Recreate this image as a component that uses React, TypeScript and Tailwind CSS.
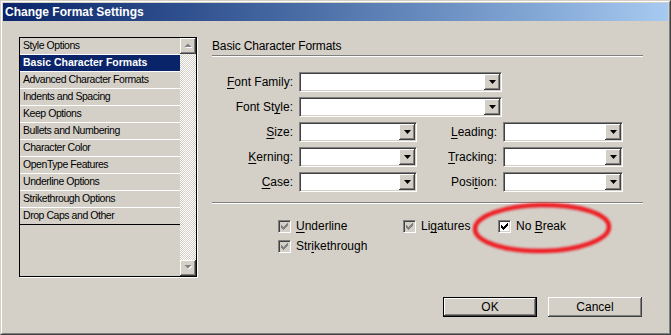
import type { ReactNode } from "react";

const items = [
  "Style Options",
  "Basic Character Formats",
  "Advanced Character Formats",
  "Indents and Spacing",
  "Keep Options",
  "Bullets and Numbering",
  "Character Color",
  "OpenType Features",
  "Underline Options",
  "Strikethrough Options",
  "Drop Caps and Other",
];

const raised =
  "bg-[#d4d0c8] shadow-[inset_-1px_-1px_0_#404040,inset_1px_1px_0_#ffffff,inset_-2px_-2px_0_#808080,inset_2px_2px_0_#d4d0c8]";

const sunken =
  "border border-t-[#808080] border-l-[#808080] border-b-white border-r-white shadow-[inset_1px_1px_0_#404040,inset_-1px_-1px_0_#d4d0c8]";

function Key({ children }: { children: ReactNode }) {
  return <span className="underline underline-offset-[2px]">{children}</span>;
}

function DropButton() {
  return (
    <div className={`flex h-full w-[16px] items-center justify-center ${raised}`}>
      <svg width="7" height="4" viewBox="0 0 7 4">
        <polygon points="0,0 7,0 3.5,4" fill="#000" />
      </svg>
    </div>
  );
}

function Combo({ width }: { width: string }) {
  return (
    <div className={`ml-[6px] flex h-[20px] justify-end bg-white p-[1px] ${sunken} ${width}`}>
      <DropButton />
    </div>
  );
}

function ScrollButton({ up }: { up: boolean }) {
  return (
    <div className={`flex h-[16px] w-[16px] items-center justify-center ${raised}`}>
      <svg width="9" height="6" viewBox="0 0 9 6">
        {up ? (
          <>
            <polygon points="1.5,5 8.5,5 5,1.5" fill="#ffffff" />
            <polygon points="0.5,4 7.5,4 4,0.5" fill="#808080" />
          </>
        ) : (
          <>
            <polygon points="1.5,1 8.5,1 5,4.5" fill="#ffffff" />
            <polygon points="0.5,0 7.5,0 4,3.5" fill="#808080" />
          </>
        )}
      </svg>
    </div>
  );
}

function Check({ enabled, children }: { enabled: boolean; children: ReactNode }) {
  return (
    <div className="flex h-[20px] items-center gap-[5px]">
      <div
        className={`flex h-[13px] w-[13px] items-center justify-center ${sunken} ${
          enabled ? "bg-white" : "bg-[#d4d0c8]"
        }`}
      >
        <svg width="7" height="7" viewBox="0 0 7 7" shapeRendering="crispEdges">
          <path
            d="M6 0h1v3h-1v1h-1v1h-1v1h-1v1h-1v-1h-1v-1h-1v-3h1v1h1v1h1v-1h1v-1h1z"
            fill={enabled ? "#000" : "#808080"}
          />
        </svg>
      </div>
      <span className="text-[12px] leading-none text-black">{children}</span>
    </div>
  );
}

function Label({ children, width }: { children: ReactNode; width: string }) {
  return <span className={`text-right text-[12px] leading-none ${width}`}>{children}</span>;
}

export default function App() {
  return (
    <div className="relative flex h-[335px] w-[671px] flex-col border border-t-[#d4d0c8] border-l-[#d4d0c8] border-b-[#404040] border-r-[#404040] bg-[#d4d0c8] font-['Liberation_Sans',Arial,sans-serif] text-black">
      <div className="flex flex-1 flex-col border border-t-white border-l-white border-b-[#808080] border-r-[#808080] p-[1px]">
        {/* title bar */}
        <div className="flex h-[18px] items-center bg-gradient-to-r from-[#0a246a] to-[#a6caf0] pl-[2px]">
          <span className="text-[12px] font-bold leading-none text-white">Change Format Settings</span>
        </div>

        <div className="flex flex-1 pb-[15px] pl-[16px] pt-[16px]">
          {/* category list */}
          <div className="flex h-[240px] w-[178px] border border-black shadow-[1px_1px_0_#ffffff]">
            <div className="flex w-[160px] flex-col">
              {items.map((item, i) => (
                <div
                  key={item}
                  className={`flex h-[17px] items-center border-b pl-[3px] ${
                    i === items.length - 1 ? "border-black" : "border-white"
                  } ${
                    i === 1
                      ? "bg-[#0a246a] text-[10.5px] font-bold text-white"
                      : "text-[10.5px] tracking-[-0.45px] text-black"
                  }`}
                >
                  {item}
                </div>
              ))}
            </div>
            <div className="flex w-[16px] flex-col">
              <ScrollButton up />
              <div className="flex-1 bg-[repeating-conic-gradient(#d4d0c8_0%_25%,#ffffff_0%_50%)] bg-[length:2px_2px]" />
              <ScrollButton up={false} />
            </div>
          </div>

          {/* settings panel */}
          <div className="ml-[15px] flex w-[431px] flex-col">
            <div className="flex h-[18px] items-center text-[12px] tracking-[-0.15px]">Basic Character Formats</div>
            <div className="border-t border-b border-t-[#808080] border-b-white" />

            <div className="mt-[15px] flex flex-col gap-[5px]">
              <div className="flex items-center">
                <Label width="w-[81px]"><Key>F</Key>ont Family:</Label>
                <Combo width="w-[203px]" />
              </div>
              <div className="flex items-center">
                <Label width="w-[81px]">Font St<Key>y</Key>le:</Label>
                <Combo width="w-[203px]" />
              </div>
              <div className="flex items-center">
                <Label width="w-[81px]"><Key>S</Key>ize:</Label>
                <Combo width="w-[118px]" />
                <Label width="w-[80px]"><Key>L</Key>eading:</Label>
                <Combo width="w-[120px]" />
              </div>
              <div className="flex items-center">
                <Label width="w-[81px]"><Key>K</Key>erning:</Label>
                <Combo width="w-[118px]" />
                <Label width="w-[80px]"><Key>T</Key>racking:</Label>
                <Combo width="w-[120px]" />
              </div>
              <div className="flex items-center">
                <Label width="w-[81px]"><Key>C</Key>ase:</Label>
                <Combo width="w-[118px]" />
                <Label width="w-[80px]">Posi<Key>t</Key>ion:</Label>
                <Combo width="w-[120px]" />
              </div>
            </div>

            <div className="mt-[10px] border-t border-b border-t-[#808080] border-b-white" />

            <div className="mt-[12px] grid grid-cols-[125px_95px_auto] pl-[66px]">
              <Check enabled={false}>
                <Key>U</Key>nderline
              </Check>
              <Check enabled={false}>
                Li<Key>g</Key>atures
              </Check>
              <Check enabled>
                No <Key>B</Key>reak
              </Check>
              <Check enabled={false}>
                Str<Key>i</Key>kethrough
              </Check>
            </div>

            <div className="mt-auto flex justify-end gap-[11px] pr-[1px]">
              <div className="h-[20px] w-[94px] border border-black">
                <div className={`flex h-full items-center justify-center text-[12px] ${raised}`}>OK</div>
              </div>
              <div className={`flex h-[20px] w-[94px] items-center justify-center text-[12px] ${raised}`}>Cancel</div>
            </div>
          </div>
        </div>
      </div>

      {/* hand-drawn annotation */}
      <svg className="pointer-events-none absolute left-[-1px] top-[-1px]" width="671" height="335">
        <defs>
          <filter id="soft" x="-10%" y="-10%" width="120%" height="120%">
            <feGaussianBlur stdDeviation="0.9" />
          </filter>
        </defs>
        <ellipse
          cx="542"
          cy="228"
          rx="67"
          ry="23"
          fill="none"
          stroke="#ee1c24"
          strokeWidth="4.5"
          filter="url(#soft)"
          transform="rotate(-1 542 228)"
        />
      </svg>
    </div>
  );
}
